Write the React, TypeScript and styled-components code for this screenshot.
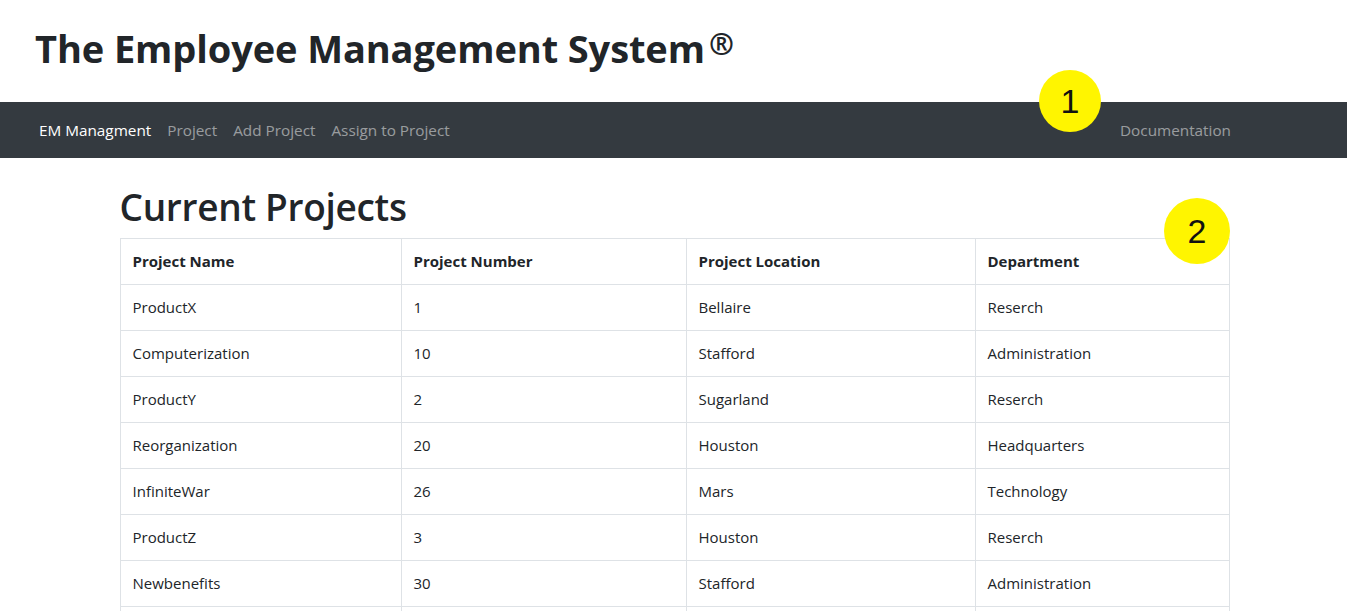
import styled, { createGlobalStyle } from 'styled-components';

const GlobalStyle = createGlobalStyle`
  body {
    margin: 0;
    font-family: "Open Sans", "Noto Sans", sans-serif;
    color: #212529;
    background: #fff;
  }
`;

const Page = styled.div`
  position: relative;
  height: 611px;
  overflow: hidden;
`;

const Header = styled.header`
  height: 96px;
  padding-bottom: 6px;
  display: flex;
  align-items: center;
  padding-left: 35px;
`;

const Title = styled.h1`
  margin: 0;
  font-size: 38px;
  font-weight: 700;
  letter-spacing: -0.1px;
  color: #212529;
`;

const Reg = styled.span`
  font-size: 30px;
  vertical-align: 8px;
  margin-left: 4px;
`;

const NavBar = styled.nav`
  height: 56px;
  background: #343a40;
  display: flex;
  align-items: center;
  padding: 0 116px 0 39px;
  font-size: 15.3px;
`;

const NavLinks = styled.div`
  display: flex;
  gap: 16px;
  flex: 1;
`;

const NavLink = styled.a<{ $active?: boolean }>`
  color: ${(p) => (p.$active ? '#fff' : 'rgba(255,255,255,0.5)')};
  text-decoration: none;
`;

const Container = styled.main`
  width: 1110px;
  margin: 0 auto;
  padding-top: 26px;
  transform: translateX(1px);
`;

const Heading = styled.h2`
  margin: 0 0 8px;
  font-size: 37px;
  font-weight: 600;
  line-height: 46px;
  letter-spacing: -0.3px;
`;

const Table = styled.table`
  width: 100%;
  table-layout: fixed;
  border-collapse: collapse;
  font-size: 15px;
`;

const Th = styled.th<{ $w?: number }>`
  box-sizing: border-box;
  width: ${(p) => (p.$w ? `${p.$w}px` : 'auto')};
  text-align: left;
  font-weight: 700;
  border: 1px solid #dee2e6;
  padding: 11px 12px;
  line-height: 23px;
`;

const Td = styled.td`
  border: 1px solid #dee2e6;
  padding: 11px 12px;
  line-height: 23px;
  height: 23px;
`;

const Marker = styled.div<{ $x: number; $y: number; $r: number }>`
  position: absolute;
  left: ${(p) => p.$x - p.$r}px;
  top: ${(p) => p.$y - p.$r}px;
  width: ${(p) => p.$r * 2}px;
  height: ${(p) => p.$r * 2}px;
  border-radius: 50%;
  background: #fff500;
  color: #111;
  display: flex;
  align-items: center;
  justify-content: center;
  font-family: "Liberation Sans", sans-serif;
  font-size: 34px;
`;

const rows = [
  ['ProductX', '1', 'Bellaire', 'Reserch'],
  ['Computerization', '10', 'Stafford', 'Administration'],
  ['ProductY', '2', 'Sugarland', 'Reserch'],
  ['Reorganization', '20', 'Houston', 'Headquarters'],
  ['InfiniteWar', '26', 'Mars', 'Technology'],
  ['ProductZ', '3', 'Houston', 'Reserch'],
  ['Newbenefits', '30', 'Stafford', 'Administration'],
  ['', '', '', ''],
];

export default function App() {
  return (
    <Page>
      <GlobalStyle />
      <Header>
        <Title>
          The Employee Management System<Reg>®</Reg>
        </Title>
      </Header>
      <NavBar>
        <NavLinks>
          <NavLink $active href="#">EM Managment</NavLink>
          <NavLink href="#">Project</NavLink>
          <NavLink href="#">Add Project</NavLink>
          <NavLink href="#">Assign to Project</NavLink>
        </NavLinks>
        <NavLink href="#">Documentation</NavLink>
      </NavBar>
      <Container>
        <Heading>Current Projects</Heading>
        <Table>
          <thead>
            <tr>
              <Th $w={281}>Project Name</Th>
              <Th $w={285}>Project Number</Th>
              <Th $w={289}>Project Location</Th>
              <Th>Department</Th>
            </tr>
          </thead>
          <tbody>
            {rows.map((r, ri) => (
              <tr key={ri}>
                {r.map((c, i) => (
                  <Td key={i}>{c}</Td>
                ))}
              </tr>
            ))}
          </tbody>
        </Table>
      </Container>
      <Marker $x={1070} $y={101} $r={31}>1</Marker>
      <Marker $x={1197} $y={231} $r={33}>2</Marker>
    </Page>
  );
}
